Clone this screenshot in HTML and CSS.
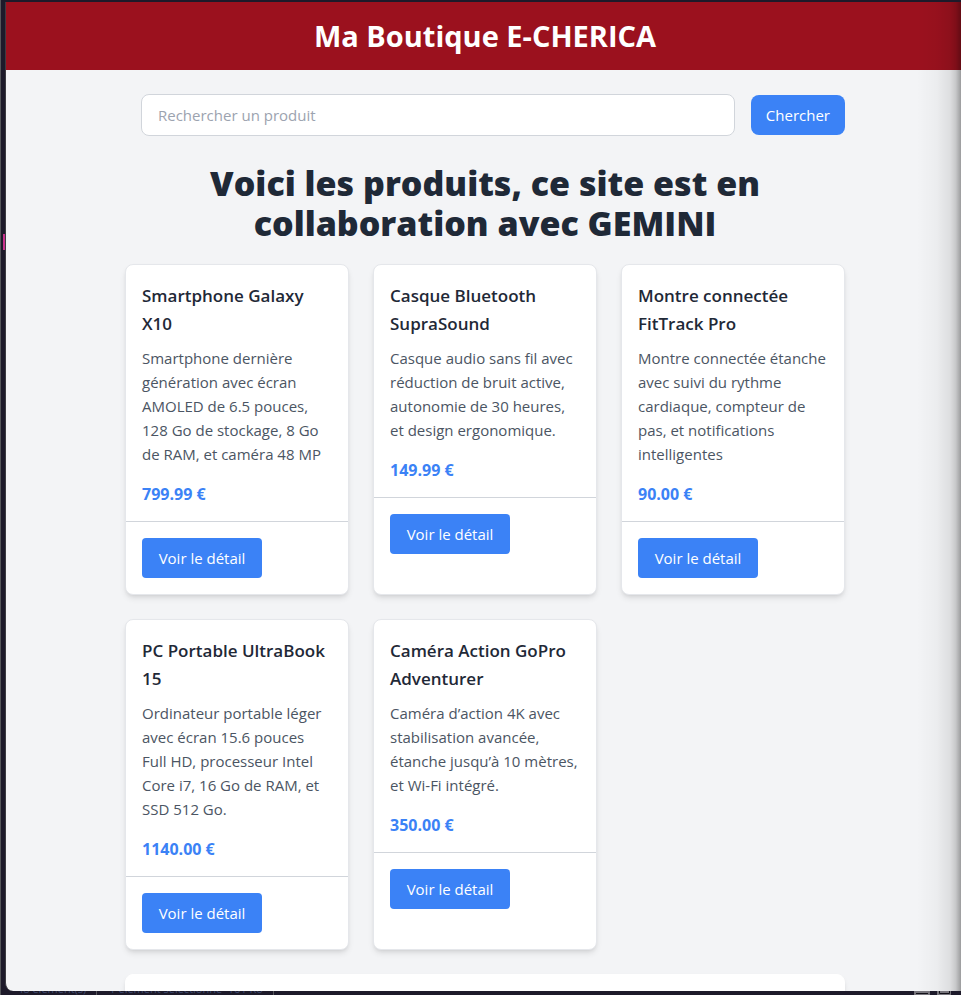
FILE: index.html
```html
<!DOCTYPE html>
<html lang="fr">
<head>
<meta charset="utf-8">
<meta name="viewport" content="width=device-width, initial-scale=1">
<title>Ma Boutique E-CHERICA</title>
<link rel="stylesheet" href="styles.css">
</head>
<body>
<div class="window">
  <header class="site-header"><h1>Ma Boutique E-CHERICA</h1></header>
  <main class="container">
    <form class="search">
      <input class="search-input" type="search" placeholder="Rechercher un produit" aria-label="Rechercher un produit">
      <button class="search-button" type="submit">Chercher</button>
    </form>
    <h2 class="headline">Voici les produits, ce site est en collaboration avec GEMINI</h2>
    <div class="products">
      <article class="card">
        <div class="card-body">
          <h3>Smartphone Galaxy X10</h3>
          <p class="description">Smartphone dernière génération avec écran AMOLED de 6.5 pouces, 128 Go de stockage, 8 Go de RAM, et caméra 48 MP</p>
          <p class="price">799.99 €</p>
        </div>
        <div class="card-footer"><a class="detail" href="#">Voir le détail</a></div>
      </article>
      <article class="card">
        <div class="card-body">
          <h3>Casque Bluetooth SupraSound</h3>
          <p class="description">Casque audio sans fil avec réduction de bruit active, autonomie de 30 heures, et design ergonomique.</p>
          <p class="price">149.99 €</p>
        </div>
        <div class="card-footer"><a class="detail" href="#">Voir le détail</a></div>
      </article>
      <article class="card">
        <div class="card-body">
          <h3>Montre connectée FitTrack Pro</h3>
          <p class="description">Montre connectée étanche avec suivi du rythme cardiaque, compteur de pas, et notifications intelligentes</p>
          <p class="price">90.00 €</p>
        </div>
        <div class="card-footer"><a class="detail" href="#">Voir le détail</a></div>
      </article>
      <article class="card">
        <div class="card-body">
          <h3>PC Portable UltraBook 15</h3>
          <p class="description">Ordinateur portable léger avec écran 15.6 pouces Full HD, processeur Intel Core i7, 16 Go de RAM, et SSD 512 Go.</p>
          <p class="price">1140.00 €</p>
        </div>
        <div class="card-footer"><a class="detail" href="#">Voir le détail</a></div>
      </article>
      <article class="card">
        <div class="card-body">
          <h3>Caméra Action GoPro Adventurer</h3>
          <p class="description">Caméra d’action 4K avec stabilisation avancée, étanche jusqu’à 10 mètres, et Wi-Fi intégré.</p>
          <p class="price">350.00 €</p>
        </div>
        <div class="card-footer"><a class="detail" href="#">Voir le détail</a></div>
      </article>
    </div>
    <section class="panel"></section>
  </main>
</div>
<div class="status">
  <span class="status-item">48 élément(s)</span>
  <span class="status-item">1 élément sélectionné&nbsp; 161 Ko</span>
  <svg class="status-views" width="38" height="4" viewBox="0 0 38 4" aria-hidden="true">
    <path fill="#77757c" d="M0 0h16v4H0zM23 0h14v4H23z"/>
    <path fill="none" stroke="#111017" d="M2 2.5h12M25.500 0v2.500h10V0"/>
  </svg>
</div>
<div class="edge-shadow"></div>
<div class="marker"></div>
</body>
</html>
```
FILE: styles.css
```css
*, *::before, *::after { box-sizing: border-box; }

body {
  margin: 0;
  height: 100vh;
  overflow: hidden;
  position: relative;
  display: flex;
  flex-direction: column;
  padding-top: 2px;
  background: #1d1a2a;
  border-left: 1px solid #55565a;
  color: #1f2937;
  font: 16px/24px "Open Sans", "Noto Sans", sans-serif;
}

h1, h2, h3, p { margin: 0; }

.window {
  flex: 1;
  min-height: 0;
  margin: 0 -3px 0 4px;
  overflow: hidden;
  background: #f3f4f6;
  border-left: 1px solid #3c3c42;
  border-radius: 0 0 0 8px;
}

.site-header {
  padding: 16px;
  background: #9b111e;
  color: #fff;
  text-align: center;
}

.site-header h1 { font-size: 29px; line-height: 36px; font-weight: 700; }

.container { max-width: 768px; margin: 0 auto; padding: 24px; }

.search { display: flex; align-items: center; gap: 16px; padding-left: 16px; }

.search-input {
  flex: 1;
  min-width: 0;
  appearance: none;
  padding: 8px 16px;
  border: 1px solid #d1d5db;
  border-radius: 8px;
  background: #fff;
  color: #1f2937;
  font: inherit;
  font-size: 15px;
}

.search-input::placeholder { color: #9ca3af; opacity: 1; }

.search-button {
  padding: 8px 15px;
  border: 0;
  border-radius: 8px;
  background: #3b82f6;
  color: #fff;
  font: inherit;
  font-size: 15px;
}

.headline {
  margin: 27px 0 21px;
  font-size: 34px;
  line-height: 40px;
  font-weight: 800;
  text-align: center;
}

.products { display: grid; grid-template-columns: repeat(3, 1fr); gap: 24px; }

.card, .panel {
  background: #fff;
  border: 1px solid #e5e7eb;
  border-radius: 8px;
  box-shadow: 0 4px 6px -1px rgb(0 0 0 / 10%), 0 2px 4px -2px rgb(0 0 0 / 10%);
}

.card-body { padding: 17px 16px 15px; border-bottom: 1px solid #d1d5db; }

.card h3 { margin-bottom: 8px; font-size: 17px; line-height: 28px; font-weight: 600; }

.description { margin-bottom: 16px; color: #4b5563; font-size: 15px; }

.price { color: #3b82f6; font-size: 16px; font-weight: 700; }

.card-footer { padding: 16px; display: flex; }

.detail {
  min-width: 120px;
  padding: 8px 16px;
  border-radius: 4px;
  background: #3b82f6;
  color: #fff;
  font-size: 15px;
  text-align: center;
  text-decoration: none;
}

.panel { margin-top: 24px; height: 160px; border-color: #fff; }

.status {
  height: 4px;
  flex: none;
  display: flex;
  align-items: flex-end;
  padding: 0 9px 0 16px;
  overflow: hidden;
  color: #3f4a70;
  font-size: 11px;
  line-height: 12px;
}

.status-item {
  margin-right: 12px;
  padding-right: 10px;
  border-right: 1px solid #55565a;
}

.status-views { margin-left: auto; }

.edge-shadow {
  position: absolute;
  top: 2px;
  right: 0;
  bottom: 4px;
  width: 44px;
  background: linear-gradient(to right, transparent, rgb(0 0 0 / 3%) 45%, rgb(0 0 0 / 9%) 75%, rgb(0 0 0 / 18%) 88%, rgb(0 0 0 / 36%));
  pointer-events: none;
}

.marker {
  position: absolute;
  left: 2px;
  top: 234px;
  width: 2px;
  height: 16px;
  background: #c8328c;
}
```
